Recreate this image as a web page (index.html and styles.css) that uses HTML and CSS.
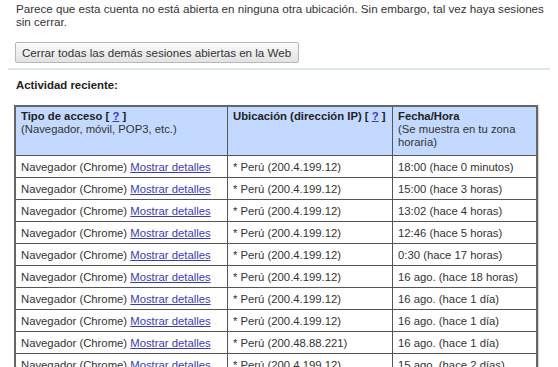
FILE: index.html
```html
<!DOCTYPE html>
<html lang="es">
<head>
<meta charset="utf-8">
<link rel="stylesheet" href="styles.css">
</head>
<body>
<div class="page">
  <p class="intro">Parece que esta cuenta no está abierta en ninguna otra ubicación. Sin embargo, tal vez haya sesiones sin cerrar.</p>
  <div class="btn-row"><button class="btn">Cerrar todas las demás sesiones abiertas en la Web</button></div>
  <div class="sep"></div>
  <h3 class="title">Actividad reciente:</h3>
  <table class="activity">
    <thead>
      <tr>
        <th class="c1"><b>Tipo de acceso [ <a href="#">?</a> ]</b><br><span class="sub">(Navegador, móvil, POP3, etc.)</span></th>
        <th class="c2"><b>Ubicación (dirección IP) [ <a href="#">?</a> ]</b></th>
        <th class="c3"><b>Fecha/Hora</b><br><span class="sub">(Se muestra en tu zona horaria)</span></th>
      </tr>
    </thead>
    <tbody>
      <tr><td>Navegador (Chrome) <a href="#">Mostrar detalles</a></td><td>* Perú (200.4.199.12)</td><td>18:00 (hace 0 minutos)</td></tr>
      <tr><td>Navegador (Chrome) <a href="#">Mostrar detalles</a></td><td>* Perú (200.4.199.12)</td><td>15:00 (hace 3 horas)</td></tr>
      <tr><td>Navegador (Chrome) <a href="#">Mostrar detalles</a></td><td>* Perú (200.4.199.12)</td><td>13:02 (hace 4 horas)</td></tr>
      <tr><td>Navegador (Chrome) <a href="#">Mostrar detalles</a></td><td>* Perú (200.4.199.12)</td><td>12:46 (hace 5 horas)</td></tr>
      <tr><td>Navegador (Chrome) <a href="#">Mostrar detalles</a></td><td>* Perú (200.4.199.12)</td><td>0:30 (hace 17 horas)</td></tr>
      <tr><td>Navegador (Chrome) <a href="#">Mostrar detalles</a></td><td>* Perú (200.4.199.12)</td><td>16 ago. (hace 18 horas)</td></tr>
      <tr><td>Navegador (Chrome) <a href="#">Mostrar detalles</a></td><td>* Perú (200.4.199.12)</td><td>16 ago. (hace 1 día)</td></tr>
      <tr><td>Navegador (Chrome) <a href="#">Mostrar detalles</a></td><td>* Perú (200.4.199.12)</td><td>16 ago. (hace 1 día)</td></tr>
      <tr><td>Navegador (Chrome) <a href="#">Mostrar detalles</a></td><td>* Perú (200.48.88.221)</td><td>16 ago. (hace 1 día)</td></tr>
      <tr><td>Navegador (Chrome) <a href="#">Mostrar detalles</a></td><td>* Perú (200.4.199.12)</td><td>15 ago. (hace 2 días)</td></tr>
    </tbody>
  </table>
</div>
</body>
</html>
```
FILE: styles.css
```css
html, body {
  margin: 0;
  padding: 0;
  background: #ffffff;
}
body {
  font-family: "Liberation Sans", Arial, sans-serif;
  font-size: 11.3px;
  color: #333333;
}
.page {
  padding: 2px 0 0 16px;
  width: 532px;
}
.intro {
  margin: 0;
  line-height: 13px;
  font-size: 11.6px;
}
.btn-row {
  margin-top: 14px;
  height: 21px;
}
.btn {
  display: block;
  box-sizing: border-box;
  font-family: "Liberation Sans", Arial, sans-serif;
  font-size: 11.6px;
  color: #333333;
  height: 21px;
  width: 284px;
  margin-left: -1px;
  padding: 0 6px;
  text-align: left;
  white-space: nowrap;
  border: 1px solid #b8b8b8;
  border-radius: 2px;
  background: linear-gradient(#fbfbfb, #e2e2e2);
}
.sep {
  height: 2px;
  background: #dde7f0;
  margin: 5px 0 0 -8px;
  width: 542px;
}
.title {
  margin: 8px 0 0 0;
  font-size: 11.4px;
  font-weight: bold;
  color: #222222;
  line-height: 14px;
}
.activity {
  margin: 13px 0 0 -2px;
  border-collapse: collapse;
  border: 2px solid #666666;
  width: 524px;
  box-shadow: 1px 1px 1px rgba(0, 0, 0, 0.15);
}
.activity th.c1 { width: 201px; }
.activity th.c2 { width: 154px; }
.activity th {
  background: #c3d9ff;
  text-align: left;
  vertical-align: top;
  font-weight: normal;
  padding: 3px 5px 6px 5px;
  height: 35px;
  line-height: 13px;
  border: 1px solid #555555;
  color: #333333;
}
.activity th b {
  color: #222222;
}
.activity td {
  height: 21px;
  padding: 0 5px;
  border: 1px solid #555555;
  white-space: nowrap;
  line-height: 14px;
}
.activity a {
  color: #3b3bb5;
  text-decoration: underline;
}
```
